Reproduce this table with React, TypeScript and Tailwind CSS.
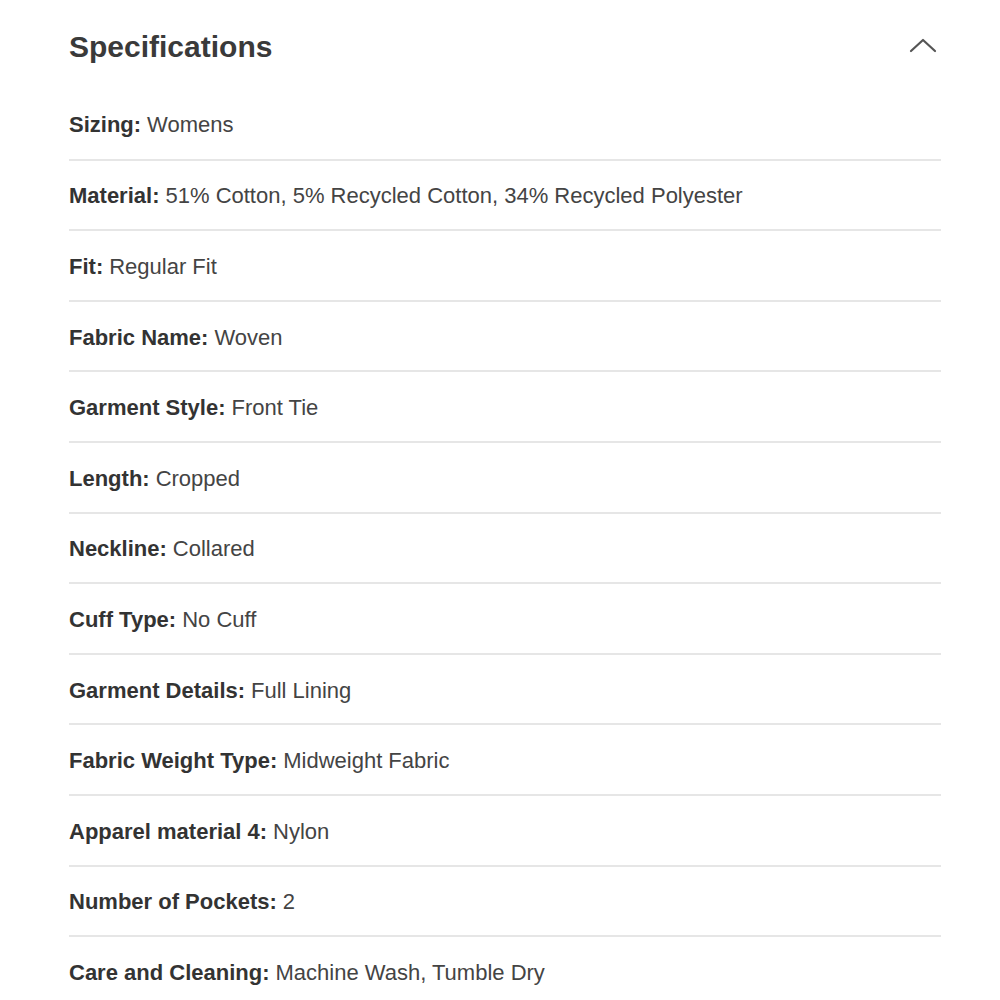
const specs: [string, string][] = [
  ["Sizing", "Womens"],
  ["Material", "51% Cotton, 5% Recycled Cotton, 34% Recycled Polyester"],
  ["Fit", "Regular Fit"],
  ["Fabric Name", "Woven"],
  ["Garment Style", "Front Tie"],
  ["Length", "Cropped"],
  ["Neckline", "Collared"],
  ["Cuff Type", "No Cuff"],
  ["Garment Details", "Full Lining"],
  ["Fabric Weight Type", "Midweight Fabric"],
  ["Apparel material 4", "Nylon"],
  ["Number of Pockets", "2"],
  ["Care and Cleaning", "Machine Wash, Tumble Dry"],
];

export default function App() {
  return (
    <div className="w-[1000px] h-[1000px] bg-white overflow-hidden font-['Liberation_Sans',Arial,sans-serif] text-[#333]">
      <div className="ml-[69px] w-[872px]">
        {/* Header */}
        <div className="h-[88px] pt-1 flex items-center justify-between">
          <h2 className="text-[30px] font-bold text-[#3a3a3a]">Specifications</h2>
          <svg
            className="mr-[4px] mt-[-2px]"
            width="28"
            height="16"
            viewBox="0 0 28 16"
            fill="none"
            stroke="#555"
            strokeWidth="2.2"
            strokeLinecap="round"
            strokeLinejoin="round"
          >
            <path d="M2 14 L14 3 L26 14" />
          </svg>
        </div>

        {/* Rows */}
        {specs.map(([label, value], i) => (
          <div
            key={label}
            className={
              "h-[70.6px] flex items-center pt-[2px] text-[22px] " +
              (i > 0 ? "border-t-2 border-[#e6e6e6]" : "")
            }
          >
            <span className="font-bold text-[#333]">{label}:</span>
            <span className="ml-[6px] text-[#444]">{value}</span>
          </div>
        ))}
      </div>
    </div>
  );
}
